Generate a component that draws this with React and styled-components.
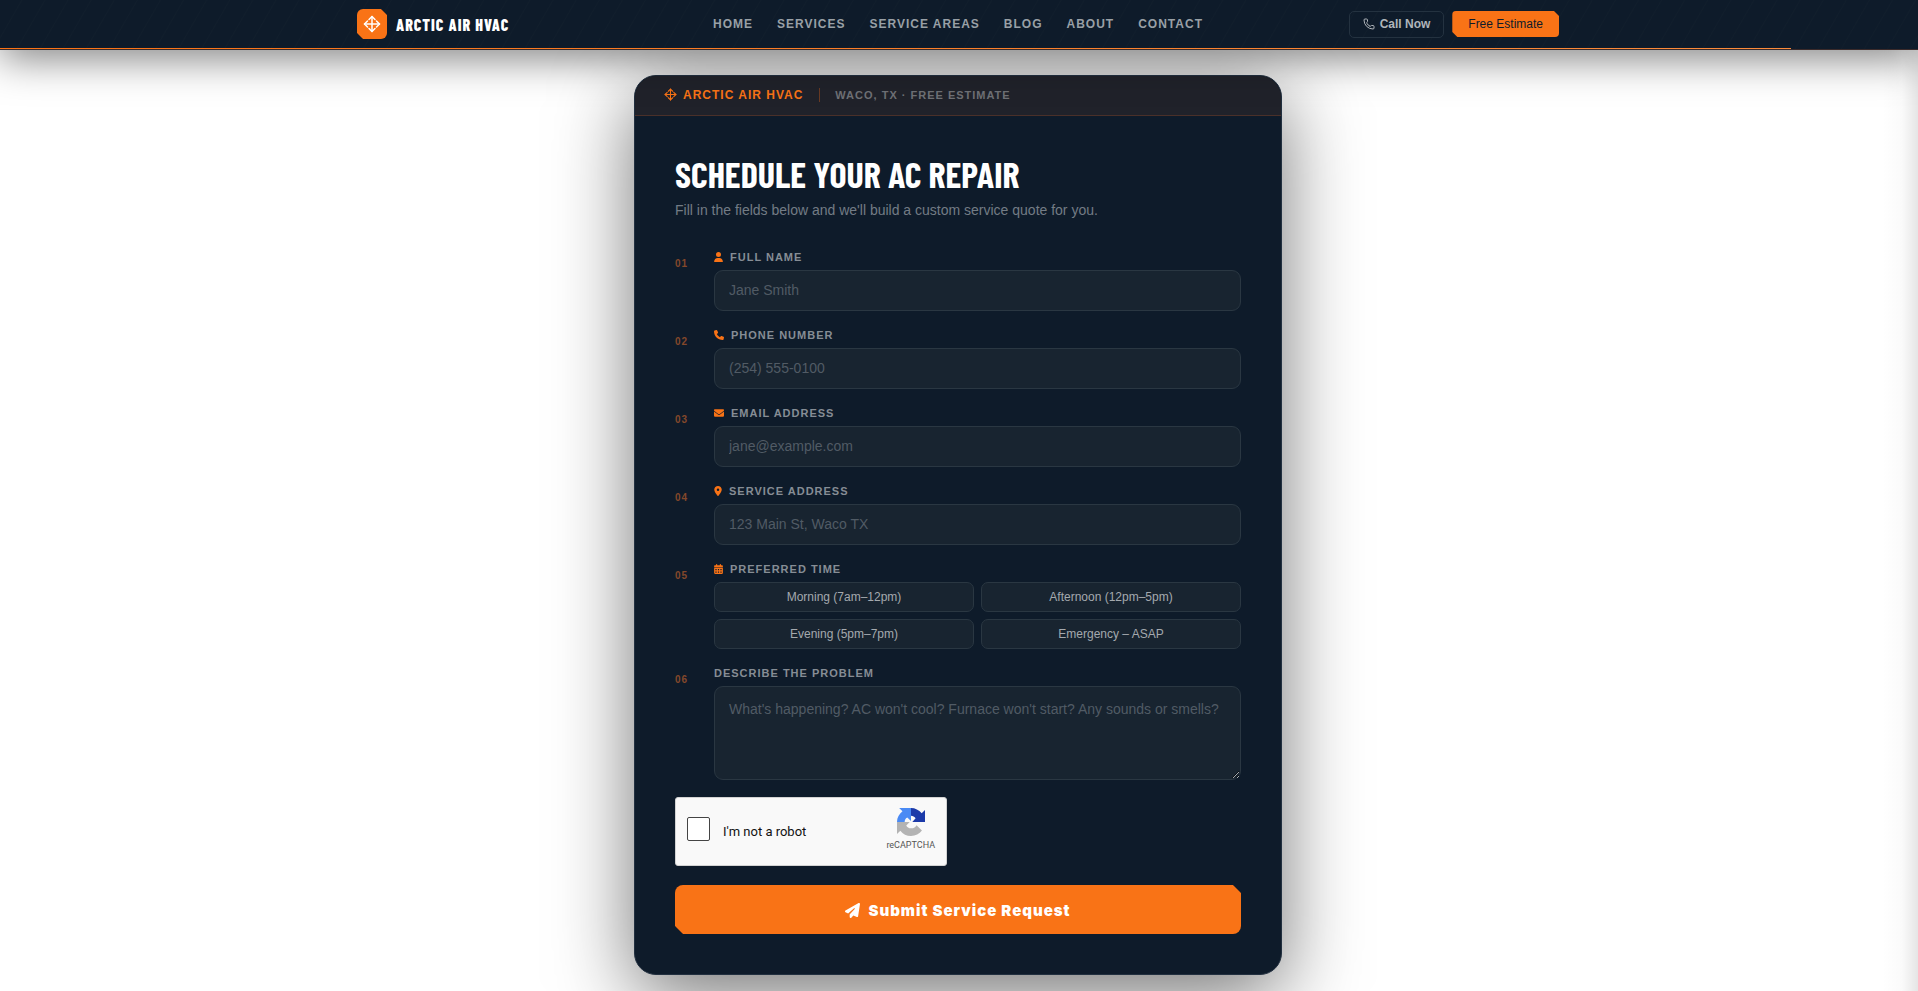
import { useState } from "react";
import styled, { createGlobalStyle } from "styled-components";
import { Phone } from "lucide-react";
import {
    FaUser,
    FaPhone,
    FaEnvelope,
    FaLocationDot,
    FaCalendarDays,
    FaPaperPlane,
} from "react-icons/fa6";

const GlobalStyle = createGlobalStyle`
    * {
        box-sizing: border-box;
    }
    body {
        margin: 0;
        background: #fff;
        font-family: "Liberation Sans", Arial, sans-serif;
        overflow: hidden;
    }
    button, input, textarea {
        font-family: inherit;
    }
`;

const Page = styled.div`
    min-height: 100vh;
    background: linear-gradient(270deg, rgba(0, 0, 0, 0.1), rgba(0, 0, 0, 0.02) 16px, transparent 36px);
`;

const Header = styled.header`
    position: relative;
    padding-right: 2px;
    border-bottom: 1px solid #3a2a2a;
    background: repeating-linear-gradient(
        120deg,
        #0e1b2a 0,
        #0e1b2a 18px,
        #111e2c 19px,
        #0e1b2a 20px
    );
    box-shadow: 0 8px 40px rgba(0, 0, 0, 0.5);
`;

const HeaderInner = styled.div`
    display: grid;
    grid-template-columns: 1fr auto 1fr;
    align-items: center;
    max-width: 1250px;
    height: 49px;
    margin: 0 auto;
    padding: 0 24px 1px;
`;

const Progress = styled.div`
    position: absolute;
    left: 0;
    bottom: 0;
    height: 1px;
    background: linear-gradient(90deg, #f97316, #fb8c3c);
`;

const Brand = styled.a`
    display: flex;
    align-items: center;
    gap: 9px;
    color: #fff;
    font-family: "Barlow Condensed", "Roboto Condensed", "Open Sans Condensed", "Liberation Sans", sans-serif;
    font-size: 16px;
    font-weight: 800;
    letter-spacing: 1px;
    text-decoration: none;
    text-transform: uppercase;
`;

const BrandMark = styled.span`
    display: flex;
    align-items: center;
    justify-content: center;
    width: 30px;
    height: 30px;
    border-radius: 6px;
    background: #f97316;
    clip-path: polygon(0 0, 24px 0, 100% 6px, 100% 100%, 6px 100%, 0 24px);
`;

const Nav = styled.nav`
    display: flex;
    gap: 24px;
`;

const NavLink = styled.a`
    color: #99a0a6;
    font-size: 12px;
    font-weight: 700;
    letter-spacing: 1px;
    text-decoration: none;
    text-transform: uppercase;
`;

const Actions = styled.div`
    display: flex;
    align-items: center;
    justify-content: flex-end;
    gap: 8px;
`;

const CallButton = styled.a`
    display: flex;
    align-items: center;
    gap: 5px;
    height: 27px;
    padding: 0 13px;
    border: 1px solid #243240;
    border-radius: 5px;
    color: #b0b5ba;
    font-size: 12px;
    font-weight: 700;
    text-decoration: none;
`;

const EstimateButton = styled.a`
    display: flex;
    align-items: center;
    height: 26px;
    padding: 0 16px;
    border-radius: 4px;
    background: #f97316;
    clip-path: polygon(0 0, calc(100% - 5px) 0, 100% 5px, 100% 100%, 5px 100%, 0 calc(100% - 5px));
    color: #0e1b2a;
    font-size: 12px;
    text-decoration: none;
`;

const Main = styled.main`
    padding: 25px 2px 16px 0;
`;

const Card = styled.section`
    max-width: 648px;
    margin: 0 auto;
    border: 1px solid #223040;
    border-radius: 22px;
    background: #0e1b2a;
    box-shadow: 0 20px 80px rgba(0, 0, 0, 0.55);
    overflow: hidden;
`;

const CardBar = styled.div`
    display: flex;
    align-items: center;
    height: 40px;
    padding: 0 29px 2px;
    border-bottom: 1px solid #4a3029;
    background: #20222a;
    font-size: 12px;
    font-weight: 700;
    text-transform: uppercase;
`;

const BarBrand = styled.span`
    display: flex;
    align-items: center;
    gap: 6px;
    padding-right: 16px;
    border-right: 1px solid #693a23;
    color: #f97316;
    letter-spacing: 1px;
`;

const BarNote = styled.span`
    padding-left: 15px;
    color: #6f7176;
    font-size: 11px;
    letter-spacing: 1px;
`;

const Form = styled.form`
    padding: 40px;
`;

const Title = styled.h1`
    margin: 0;
    color: #fff;
    font-family: "Barlow Condensed", "Roboto Condensed", "Open Sans Condensed", "Liberation Sans", sans-serif;
    font-size: 36px;
    font-weight: 700;
    line-height: 36px;
    text-transform: uppercase;
`;

const Subtitle = styled.p`
    margin: 7px 0 29px;
    color: #737c85;
    font-size: 14px;
    line-height: 22px;
`;

const Row = styled.div`
    display: grid;
    grid-template-columns: 32px 1fr;
    gap: 7px;
    margin-bottom: 17px;
`;

const Step = styled.span`
    padding-top: 8px;
    color: #84482a;
    font-size: 10px;
    font-weight: 700;
    letter-spacing: 1px;
    line-height: 12px;
`;

const Field = styled.div`
    display: flex;
    flex-direction: column;
    gap: 7px;
    min-width: 0;
`;

const Label = styled.label`
    display: flex;
    align-items: center;
    gap: 7px;
    height: 13px;
    color: #868d95;
    font-size: 11px;
    font-weight: 700;
    letter-spacing: 1px;
    text-transform: uppercase;

    svg {
        width: ${(props) => props.$iconWidth}px;
        height: 10px;
        color: #f97316;
    }
`;

const Input = styled.input`
    width: 100%;
    height: 41px;
    padding: 0 14px 2px;
    border: 1px solid #2a3742;
    border-radius: 9px;
    outline: none;
    background: #182430;
    color: #fff;
    font-size: 14px;

    &::placeholder {
        color: #515b65;
    }
`;

const TextArea = styled.textarea`
    display: block;
    width: 100%;
    height: 94px;
    padding: 14px;
    border: 1px solid #2a3742;
    border-radius: 9px;
    outline: none;
    background: #182430;
    color: #fff;
    font-size: 14px;
    resize: vertical;

    &::placeholder {
        color: #515b65;
    }
`;

const Times = styled.div`
    display: grid;
    grid-template-columns: 1fr 1fr;
    gap: 7px;
`;

const TimeButton = styled.button`
    height: 30px;
    border: 1px solid ${(props) => (props.$active ? "#f97316" : "#2a3742")};
    border-radius: 7px;
    background: #182430;
    color: #a4a9ae;
    font-size: 12px;
    cursor: pointer;
`;

const Captcha = styled.div`
    display: flex;
    align-items: center;
    justify-content: space-between;
    width: 272px;
    height: 69px;
    margin-bottom: 19px;
    padding: 0 11px;
    border: 1px solid #d3d3d3;
    border-radius: 3px;
    background: #f9f9f9;
    font-family: Roboto, sans-serif;
`;

const CaptchaLabel = styled.label`
    display: flex;
    align-items: center;
    gap: 13px;
    color: #111;
    font-size: 13px;
`;

const Checkbox = styled.input`
    appearance: none;
    width: 23px;
    height: 24px;
    margin: 0 0 5px;
    border: 1px solid #444;
    border-radius: 2px;
    background: #fff;
`;

const CaptchaLogo = styled.div`
    display: flex;
    flex-direction: column;
    align-items: center;
    gap: 3px;
    margin-bottom: 5px;
    color: #555;
    font-size: 9px;
    line-height: 12px;
`;

const Submit = styled.button`
    display: flex;
    align-items: center;
    justify-content: center;
    gap: 8px;
    width: 100%;
    height: 49px;
    padding: 2px 0 0;
    border: 0;
    border-radius: 8px;
    background: #f97316;
    clip-path: polygon(0 0, calc(100% - 8px) 0, 100% 8px, 100% 100%, 8px 100%, 0 calc(100% - 8px));
    color: #fff;
    font-family: Inter, sans-serif;
    font-size: 15px;
    font-weight: 900;
    letter-spacing: 1px;
    cursor: pointer;
`;

const links = ["Home", "Services", "Service Areas", "Blog", "About", "Contact"];

const fields = [
    { id: "name", label: "Full Name", type: "text", placeholder: "Jane Smith", icon: FaUser, width: 9 },
    { id: "phone", label: "Phone Number", type: "tel", placeholder: "(254) 555-0100", icon: FaPhone, width: 10 },
    { id: "email", label: "Email Address", type: "email", placeholder: "jane@example.com", icon: FaEnvelope, width: 10 },
    { id: "address", label: "Service Address", type: "text", placeholder: "123 Main St, Waco TX", icon: FaLocationDot, width: 8 },
];

const times = ["Morning (7am–12pm)", "Afternoon (12pm–5pm)", "Evening (5pm–7pm)", "Emergency – ASAP"];

function CompassMark({ size }) {
    return (
        <svg width={size} height={size} viewBox="0 0 24 24" fill="none" stroke="currentColor" strokeWidth="2" strokeLinecap="round" strokeLinejoin="round">
            <path d="M12 2v20M2 12h20" />
            <path d="M8 6l4-4 4 4M18 8l4 4-4 4M16 18l-4 4-4-4M6 16l-4-4 4-4" />
        </svg>
    );
}

function RecaptchaMark() {
    return (
        <svg width="28" height="28" viewBox="0 0 64 64">
            <path fill="#1c3aa9" d="M64 32V4.600l-7.600 7.600C50.200 4.700 41.500 0 32 0v17.500c4 0 8.500 2.500 10.500 6L35 31.900z" />
            <path fill="#4a8af4" d="M32 0H5l7.500 7.500C5 13.500 0 22 0 32h17.500c0-4 1.500-8.500 6-10.500l8.500 8z" />
            <path fill="#b3b3b3" d="M0 32v27.400l7.600-7.600C13.500 59.300 22.200 64 32 64c10.200 0 19.300-4.800 25-12.300L44.600 39.200c-2 3.500-6 7.300-12.600 7.300-5 0-9-2.500-10.800-6.500L29 32z" />
        </svg>
    );
}

function App() {
    const [time, setTime] = useState("");

    return (
        <Page>
            <GlobalStyle />
            <Header>
                <HeaderInner>
                    <Brand href="#">
                        <BrandMark><CompassMark size={18} /></BrandMark>
                        Arctic Air HVAC
                    </Brand>
                    <Nav>
                        {links.map((link) => (
                            <NavLink key={link} href="#">{link}</NavLink>
                        ))}
                    </Nav>
                    <Actions>
                        <CallButton href="tel:2545550100"><Phone size={12} />Call Now</CallButton>
                        <EstimateButton href="#form">Free Estimate</EstimateButton>
                    </Actions>
                </HeaderInner>
                <Progress style={{ width: "93.4%" }} />
            </Header>
            <Main>
                <Card>
                    <CardBar>
                        <BarBrand><CompassMark size={13} />Arctic Air HVAC</BarBrand>
                        <BarNote>Waco, TX · Free Estimate</BarNote>
                    </CardBar>
                    <Form id="form" onSubmit={(e) => e.preventDefault()}>
                        <Title>Schedule Your AC Repair</Title>
                        <Subtitle>Fill in the fields below and we'll build a custom service quote for you.</Subtitle>
                        {fields.map(({ id, label, type, placeholder, icon: Icon, width }, i) => (
                            <Row key={id}>
                                <Step>0{i + 1}</Step>
                                <Field>
                                    <Label htmlFor={id} $iconWidth={width}><Icon />{label}</Label>
                                    <Input id={id} type={type} placeholder={placeholder} />
                                </Field>
                            </Row>
                        ))}
                        <Row>
                            <Step>05</Step>
                            <Field>
                                <Label as="div" id="time" $iconWidth={9}><FaCalendarDays />Preferred Time</Label>
                                <Times role="group" aria-labelledby="time">
                                    {times.map((t) => (
                                        <TimeButton key={t} type="button" $active={time === t} onClick={() => setTime(t)}>{t}</TimeButton>
                                    ))}
                                </Times>
                            </Field>
                        </Row>
                        <Row>
                            <Step>06</Step>
                            <Field>
                                <Label htmlFor="problem">Describe the Problem</Label>
                                <TextArea id="problem" placeholder="What's happening? AC won't cool? Furnace won't start? Any sounds or smells?" />
                            </Field>
                        </Row>
                        <Captcha>
                            <CaptchaLabel><Checkbox type="checkbox" />I'm not a robot</CaptchaLabel>
                            <CaptchaLogo>
                                <RecaptchaMark />
                                reCAPTCHA
                            </CaptchaLogo>
                        </Captcha>
                        <Submit type="submit"><FaPaperPlane size={15} />Submit Service Request</Submit>
                    </Form>
                </Card>
            </Main>
        </Page>
    );
}

export default App;
